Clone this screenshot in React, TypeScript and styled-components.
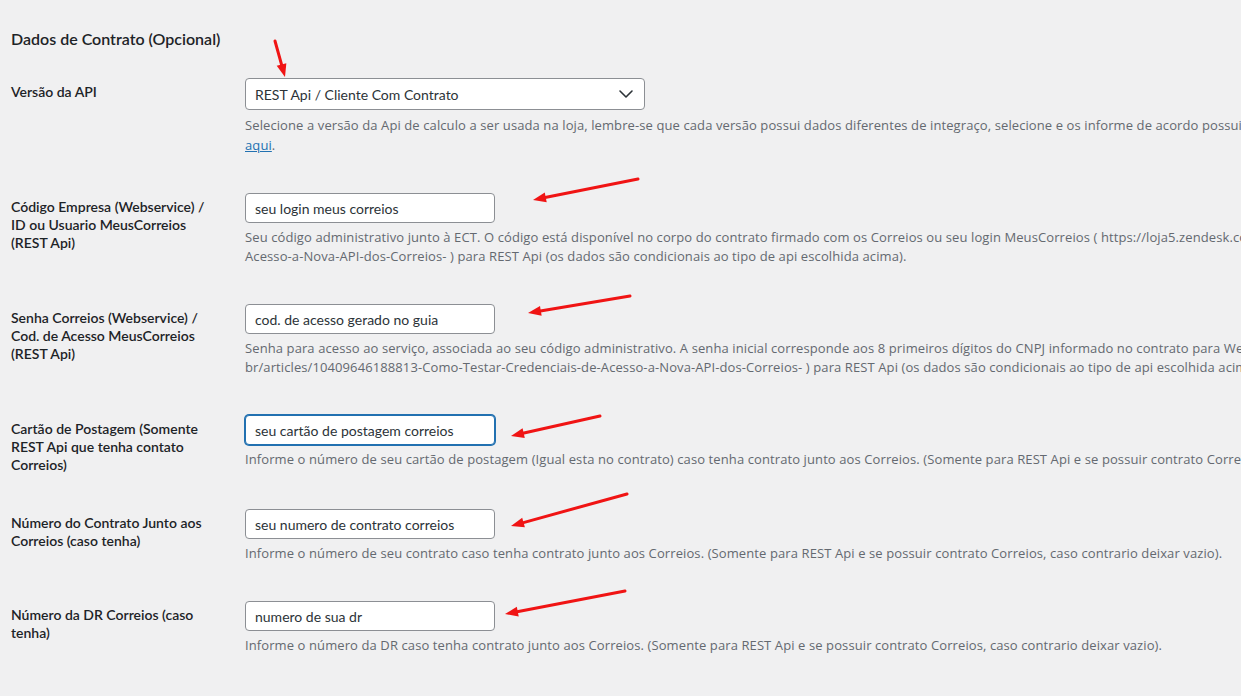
import React from 'react';
import styled, { createGlobalStyle, css } from 'styled-components';
import { ChevronDown } from 'lucide-react';

const GlobalStyle = createGlobalStyle`
  html, body {
    margin: 0;
    padding: 0;
    background: #f0f0f1;
    overflow: hidden;
  }
  body {
    font-family: 'Segoe UI', Lato, 'Open Sans', sans-serif;
    color: #1d2327;
    font-size: 13px;
  }
`;

const Page = styled.div`
  position: relative;
  width: 1241px;
  height: 696px;
  padding: 28px 0 0 11px;
  box-sizing: border-box;
  overflow: hidden;
`;

const Heading = styled.h2`
  margin: 0 0 13px;
  font-size: 16px;
  line-height: 22px;
  font-weight: 600;
  color: #1d2327;
`;

const FormTable = styled.table`
  table-layout: fixed;
  width: 1800px;
  border-collapse: collapse;
  border-spacing: 0;
`;

const Label = styled.th`
  width: 214px;
  padding: 20px 10px 20px 0;
  text-align: left;
  vertical-align: top;
  font-size: 14px;
  line-height: 18px;
  font-weight: 600;
  color: #1d2327;
  white-space: nowrap;
`;

const Field = styled.td`
  padding: 15px 10px;
  vertical-align: top;
`;

const fieldBase = css`
  box-sizing: border-box;
  border: 1px solid #8c8f94;
  border-radius: 4px;
  background: #fff;
  color: #2c3338;
  font-family: inherit;
  font-size: 14px;
  outline: none;
  display: block;
  margin: 0;
`;

const TextInput = styled.input<{ $focused?: boolean }>`
  ${fieldBase};
  width: 250px;
  height: 30px;
  padding: 0 9px;
  ${p =>
    p.$focused &&
    css`
      border-color: #2271b1;
      box-shadow: 0 0 0 1px #2271b1;
    `}
`;

const SelectWrap = styled.div`
  position: relative;
  width: 400px;
`;

const Select = styled.select`
  ${fieldBase};
  appearance: none;
  width: 400px;
  height: 32px;
  padding: 0 24px 0 9px;
`;

const SelectIcon = styled.span`
  position: absolute;
  right: 7px;
  top: 4px;
  display: flex;
  color: #2c3338;
  pointer-events: none;
`;

const Description = styled.p<{ $loose?: boolean }>`
  margin: 5px 0 8px;
  font-family: 'Open Sans', sans-serif;
  font-size: 13px;
  letter-spacing: 0.1px;
  line-height: ${p => (p.$loose ? '20px' : '19px')};
  color: #646970;
  white-space: nowrap;
`;

const Link = styled.a`
  color: #2271b1;
  text-decoration: underline;
`;

const ArrowLayer = styled.svg`
  position: absolute;
  left: 0;
  top: 0;
  pointer-events: none;
`;

type Pt = [number, number];

const Arrow: React.FC<{ from: Pt; to: Pt }> = ({ from, to }) => {
  const dx = to[0] - from[0];
  const dy = to[1] - from[1];
  const len = Math.hypot(dx, dy);
  const ux = dx / len;
  const uy = dy / len;
  const hl = 13;
  const hw = 5;
  const bx = to[0] - ux * hl;
  const by = to[1] - uy * hl;
  const px = -uy * hw;
  const py = ux * hw;
  return (
    <g>
      <line x1={from[0]} y1={from[1]} x2={bx + ux * 2} y2={by + uy * 2} stroke="#f01414" strokeWidth={3} strokeLinecap="round" />
      <polygon
        points={`${to[0]},${to[1]} ${bx + px},${by + py} ${bx - px},${by - py}`}
        fill="#f01414"
      />
    </g>
  );
};

const arrows: { from: Pt; to: Pt }[] = [
  { from: [275, 41], to: [285, 77] },
  { from: [638, 179], to: [533, 200] },
  { from: [630, 296], to: [528, 313] },
  { from: [600, 416], to: [511, 436] },
  { from: [627, 494], to: [511, 526] },
  { from: [625, 591], to: [505, 614] },
];

const App: React.FC = () => {
  return (
    <>
      <GlobalStyle />
      <Page>
        <Heading>Dados de Contrato (Opcional)</Heading>
        <FormTable>
          <tbody>
            <tr>
              <Label>Versão da API</Label>
              <Field>
                <SelectWrap>
                  <Select defaultValue="rest">
                    <option value="rest">REST Api / Cliente Com Contrato</option>
                    <option value="ws">Webservice</option>
                  </Select>
                  <SelectIcon>
                    <ChevronDown size={24} strokeWidth={1.6} />
                  </SelectIcon>
                </SelectWrap>
                <Description $loose>
                  Selecione a versão da Api de calculo a ser usada na loja, lembre-se que cada versão possui dados diferentes de integraço, selecione e os informe de acordo possuindo contrato ou não, saiba mais
                  <br />
                  <Link href="#">aqui</Link>.
                </Description>
              </Field>
            </tr>
            <tr>
              <Label>
                Código Empresa (Webservice) /<br />
                ID ou Usuario MeusCorreios<br />
                (REST Api)
              </Label>
              <Field>
                <TextInput defaultValue="seu login meus correios" />
                <Description>
                  Seu código administrativo junto à ECT. O código está disponível no corpo do contrato firmado com os Correios ou seu login MeusCorreios ( https://loja5.zendesk.com/hc/pt-br/articles/10409646188813-Como-Testar-Credenciais-de-
                  <br />
                  Acesso-a-Nova-API-dos-Correios- ) para REST Api (os dados são condicionais ao tipo de api escolhida acima).
                </Description>
              </Field>
            </tr>
            <tr>
              <Label>
                Senha Correios (Webservice) /<br />
                Cod. de Acesso MeusCorreios<br />
                (REST Api)
              </Label>
              <Field>
                <TextInput defaultValue="cod. de acesso gerado no guia" />
                <Description>
                  Senha para acesso ao serviço, associada ao seu código administrativo. A senha inicial corresponde aos 8 primeiros dígitos do CNPJ informado no contrato para Webservice ou o cod. de acesso ( https://loja5.zendesk.com/hc/pt-
                  <br />
                  br/articles/10409646188813-Como-Testar-Credenciais-de-Acesso-a-Nova-API-dos-Correios- ) para REST Api (os dados são condicionais ao tipo de api escolhida acima).
                </Description>
              </Field>
            </tr>
            <tr>
              <Label>
                Cartão de Postagem (Somente<br />
                REST Api que tenha contato<br />
                Correios)
              </Label>
              <Field>
                <TextInput $focused defaultValue="seu cartão de postagem correios" />
                <Description>
                  Informe o número de seu cartão de postagem (Igual esta no contrato) caso tenha contrato junto aos Correios. (Somente para REST Api e se possuir contrato Correios, caso contrario deixar vazio).
                </Description>
              </Field>
            </tr>
            <tr>
              <Label>
                Número do Contrato Junto aos<br />
                Correios (caso tenha)
              </Label>
              <Field>
                <TextInput defaultValue="seu numero de contrato correios" />
                <Description>
                  Informe o número de seu contrato caso tenha contrato junto aos Correios. (Somente para REST Api e se possuir contrato Correios, caso contrario deixar vazio).
                </Description>
              </Field>
            </tr>
            <tr>
              <Label>
                Número da DR Correios (caso<br />
                tenha)
              </Label>
              <Field>
                <TextInput defaultValue="numero de sua dr" />
                <Description>
                  Informe o número da DR caso tenha contrato junto aos Correios. (Somente para REST Api e se possuir contrato Correios, caso contrario deixar vazio).
                </Description>
              </Field>
            </tr>
          </tbody>
        </FormTable>
        <ArrowLayer width={1241} height={696} viewBox="0 0 1241 696">
          {arrows.map((a, i) => (
            <Arrow key={i} from={a.from} to={a.to} />
          ))}
        </ArrowLayer>
      </Page>
    </>
  );
};

export default App;
